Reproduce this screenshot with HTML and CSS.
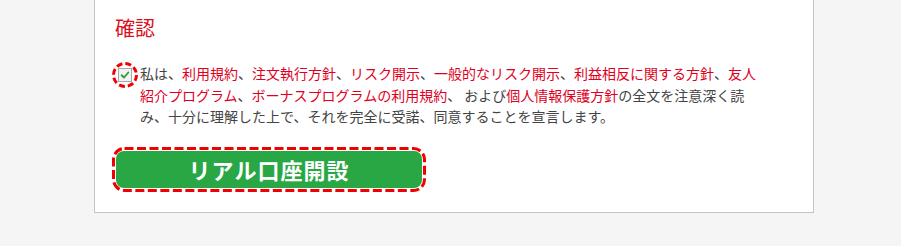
FILE: index.html
```html
<!DOCTYPE html>
<html lang="ja">
<head>
<meta charset="utf-8">
<link rel="stylesheet" href="styles.css">
</head>
<body>
<div class="panel">
  <h2 class="title">確認</h2>
  <div class="agree">
    <span class="check-wrap">
      <svg class="ring" viewBox="0 0 26 26" width="26" height="26"><circle cx="13" cy="13" r="11.5" fill="none" stroke="#f00000" stroke-width="3" stroke-dasharray="6 3.03"/></svg>
      <span class="check">
        <svg viewBox="0 0 12 12" width="10" height="10"><path d="M2 6.3 L4.8 9 L10 3" fill="none" stroke="#2a9d3f" stroke-width="2.2" stroke-linecap="round" stroke-linejoin="round"/></svg>
      </span>
    </span>
    <p class="text">私は、<a>利用規約</a>、<a>注文執行方針</a>、<a>リスク開示</a>、<a>一般的なリスク開示</a>、<a>利益相反に関する方針</a>、<a>友人紹介プログラム</a>、<a>ボーナスプログラムの利用規約</a>、 および<a>個人情報保護方針</a>の全文を注意深く読み、十分に理解した上で、それを完全に受諾、同意することを宣言します。</p>
  </div>
  <div class="actions">
    <span class="btn-ring">
      <svg class="ring" viewBox="0 0 314 45" width="314" height="45"><rect x="1.5" y="1.5" width="311" height="42" rx="11" fill="none" stroke="#f00000" stroke-width="3" stroke-dasharray="9 3.5"/></svg>
      <button class="btn">リアル口座開設</button>
    </span>
  </div>
</div>
</body>
</html>
```
FILE: styles.css
```css
html, body {
  margin: 0;
  padding: 0;
  background: #f5f5f5;
  font-family: "Noto Sans CJK JP", "Noto Sans", sans-serif;
}
.panel {
  margin-left: 94px;
  width: 720px;
  height: 213px;
  background: #fff;
  border: 1px solid #c4c4c4;
  border-top: none;
  padding: 0 0 0 20px;
  box-sizing: border-box;
}
.title {
  margin: 0;
  padding-top: 15px;
  font-size: 20px;
  line-height: 25px;
  font-weight: normal;
  color: #d9101e;
}
.agree {
  display: flex;
  align-items: flex-start;
  margin-top: 22px;
}
.check-wrap {
  position: relative;
  flex: none;
  width: 26px;
  height: 26px;
  margin: 0 0 0 -3px;
  display: flex;
  align-items: center;
  justify-content: center;
}
.ring {
  position: absolute;
  left: 0;
  top: 0;
}
.check {
  width: 12px;
  height: 12px;
  border: 1px solid #a8a8a8;
  background: #f2f2f2;
  display: flex;
  align-items: center;
  justify-content: center;
}
.text {
  margin: 1px 0 0 2px;
  width: 625px;
  font-size: 14px;
  line-height: 21.5px;
  color: #444;
  text-spacing-trim: space-all;
  font-feature-settings: "palt" 0, "chws" 0, "halt" 0;
}
.text a {
  color: #e0001e;
}
.actions {
  margin-top: 19px;
}
.btn-ring {
  position: relative;
  display: inline-block;
  margin-left: -3px;
  padding: 4px;
  line-height: 0;
}
.btn {
  width: 306px;
  height: 37px;
  background: #2aa745;
  color: #fff;
  border: none;
  border-radius: 8px;
  font-family: "Noto Sans CJK JP", sans-serif;
  font-size: 22px;
  font-weight: bold;
  line-height: 37px;
  padding: 0;
  letter-spacing: 1px;
}
```
